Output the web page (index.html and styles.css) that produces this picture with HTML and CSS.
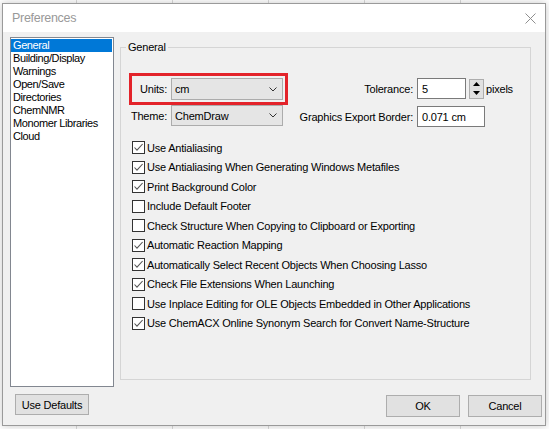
FILE: index.html
```html
<!DOCTYPE html>
<html lang="en">
<head>
  <meta charset="UTF-8" />
  <title>Preferences</title>
  <link rel="stylesheet" href="styles.css">
</head>
<body>

  <div class="dialog">
    <!-- Barra de título -->
    <div class="titlebar">
      <span class="title">Preferences</span>
      <svg class="close" viewBox="0 0 11 11" width="11" height="11">
        <path d="M0.5 0.5L10.5 10.5M10.5 0.5L0.5 10.5" stroke="#8e8e8e" stroke-width="1" fill="none"/>
      </svg>
    </div>

    <div class="content">
      <div class="main">
        <ul class="categories">
          <li class="selected">General</li>
          <li>Building/Display</li>
          <li>Warnings</li>
          <li>Open/Save</li>
          <li>Directories</li>
          <li>ChemNMR</li>
          <li>Monomer Libraries</li>
          <li>Cloud</li>
        </ul>

        <div class="group">
          <div class="group-title">General</div>

          <div class="fields">
            <div class="left-fields">
              <div class="units-box">
                <span class="field-label">Units:</span>
                <div class="combo">cm
                  <svg class="chevron" viewBox="0 0 8 5" width="8" height="5"><path d="M0.5 0.5L4 4L7.5 0.5" stroke="#333" fill="none"/></svg>
                </div>
              </div>
              <div class="theme-row">
                <span class="field-label">Theme:</span>
                <div class="combo">ChemDraw
                  <svg class="chevron" viewBox="0 0 8 5" width="8" height="5"><path d="M0.5 0.5L4 4L7.5 0.5" stroke="#333" fill="none"/></svg>
                </div>
              </div>
            </div>

            <div class="right-fields">
              <span class="field-label">Tolerance:</span>
              <div class="tolerance">
                <div class="textbox tol-input">5</div>
                <div class="spinner">
                  <svg viewBox="0 0 7 4" width="7" height="4"><path d="M3.5 0L7 4H0Z" fill="#000"/></svg>
                  <svg viewBox="0 0 7 4" width="7" height="4"><path d="M0 0H7L3.5 4Z" fill="#000"/></svg>
                </div>
                <span class="unit">pixels</span>
              </div>
              <span class="field-label">Graphics Export Border:</span>
              <div class="textbox border-input">0.071 cm</div>
            </div>
          </div>

          <ul class="options">
            <li><span class="check on"></span>Use Antialiasing</li>
            <li><span class="check on"></span>Use Antialiasing When Generating Windows Metafiles</li>
            <li><span class="check on"></span>Print Background Color</li>
            <li><span class="check"></span>Include Default Footer</li>
            <li><span class="check"></span>Check Structure When Copying to Clipboard or Exporting</li>
            <li><span class="check on"></span>Automatic Reaction Mapping</li>
            <li><span class="check on"></span>Automatically Select Recent Objects When Choosing Lasso</li>
            <li><span class="check on"></span>Check File Extensions When Launching</li>
            <li><span class="check"></span>Use Inplace Editing for OLE Objects Embedded in Other Applications</li>
            <li><span class="check on"></span>Use ChemACX Online Synonym Search for Convert Name-Structure</li>
          </ul>
        </div>
      </div>

      <div class="footer">
        <button class="btn defaults">Use Defaults</button>
        <div class="footer-right">
          <button class="btn">OK</button>
          <button class="btn">Cancel</button>
        </div>
      </div>
    </div>
  </div>

</body>
</html>
```

FILE: styles.css
```css
:root {
  --face: #f0f0f0;
  --btn: #e1e1e1;
  --btn-border: #adadad;
  --ui-font: "Liberation Sans", Arial, sans-serif;
}
* { box-sizing: border-box; margin: 0; padding: 0; }
body {
  font-family: var(--ui-font);
  font-size: 11px;
  letter-spacing: -0.2px;
  color: #000;
  background-color: #fff;
  background-image: repeating-linear-gradient(90deg, transparent 0 76px, #dadada 76px 77px, transparent 77px 96px);
  height: 429px;
  overflow: hidden;
}
ul { list-style: none; }

.dialog {
  margin: 3px 0 0 2px;
  width: 544px; height: 423px;
  border: 1px solid #9a9a9a;
  background: var(--face);
  box-shadow: 0 0 8px rgba(0,0,0,0.22);
  display: flex; flex-direction: column;
}

.titlebar {
  height: 28px;
  background: #fff;
  display: flex; align-items: center; justify-content: space-between;
  padding: 0 9px 0 9px;
}
.title { font-size: 12.5px; color: #999; letter-spacing: -0.3px; }
.close { display: block; }

.content { padding: 5px 3px 0 7px; }
.main { display: flex; gap: 6px; }

.categories {
  width: 104px; height: 350px;
  background: #fff;
  border: 1px solid #828790;
  padding: 1px 1px 0 0;
  letter-spacing: -0.4px;
}
.categories li { height: 13px; line-height: 13px; padding-left: 2px; }
.categories li.selected { background: #0078d7; color: #fff; }

/* --- grupo General --- */
.group {
  width: 411px; height: 333px;
  margin-top: 10px;
  border: 1px solid #d5d5d5;
}
.group-title {
  width: fit-content;
  margin: -7px 0 0 5px;
  padding: 0 2px;
  line-height: 13px;
  background: var(--face);
}

.fields { display: flex; align-items: flex-start; margin-top: 19px; padding-left: 8px; }
.left-fields { width: 159px; }
.units-box {
  display: flex; align-items: center; gap: 4px;
  border: 3px solid #e3232a;
  padding: 2px 2px 2px 0;
}
.units-box .field-label { width: 35px; text-align: right; }
.theme-row { display: flex; align-items: center; gap: 4px; }
.theme-row .field-label { width: 38px; text-align: right; }
.theme-row .combo { height: 21px; }

.combo {
  width: 112px; height: 22px;
  background: #e5e5e5;
  border: 1px solid #acacac;
  padding-left: 3px;
  display: flex; align-items: center; justify-content: space-between;
  padding-right: 5px;
}
.chevron { display: block; }

.right-fields {
  display: grid;
  grid-template-columns: 115px auto;
  column-gap: 4px; row-gap: 7px;
  align-items: center;
  margin: 5px 0 0 10px;
}
.right-fields .field-label { text-align: right; }
.tolerance { display: flex; align-items: center; }
.textbox {
  height: 21px;
  background: #fff;
  border: 1px solid #7a7a7a;
  padding-left: 4px;
  display: flex; align-items: center;
}
.tol-input { width: 49px; }
.border-input { width: 68px; }
.spinner {
  width: 15px; height: 20px;
  margin-left: 3px;
  border: 1px solid var(--btn-border);
  background: var(--btn);
  display: flex; flex-direction: column; align-items: center; justify-content: space-around;
}
.spinner svg { display: block; }
.unit { margin-left: 2px; }

.options { margin-top: 11px; padding-left: 11px; }
.options li { height: 19.5px; display: flex; align-items: center; gap: 2px; white-space: nowrap; }
.check {
  width: 13px; height: 13px; flex: none;
  border: 1px solid #333;
  background: #fff;
}
.check.on {
  background: #fff url("data:image/svg+xml;utf8,<svg xmlns='http://www.w3.org/2000/svg' viewBox='0 0 11 11'><path d='M1.5 5.5L4 8.2L9.6 2' stroke='%23555' stroke-width='1.1' fill='none'/></svg>") no-repeat center / 11px 11px;
}

/* --- botones --- */
.footer { display: flex; justify-content: space-between; align-items: flex-start; }
.btn {
  font-family: var(--ui-font);
  font-size: 11px;
  letter-spacing: -0.2px;
  color: #000;
  width: 74px;
  background: var(--btn);
  border: 1px solid var(--btn-border);
}
.defaults { height: 21px; margin: 7px 0 0 5px; }
.footer-right { display: flex; gap: 8px; margin-top: 8px; }
.footer-right .btn { height: 22px; }
```
